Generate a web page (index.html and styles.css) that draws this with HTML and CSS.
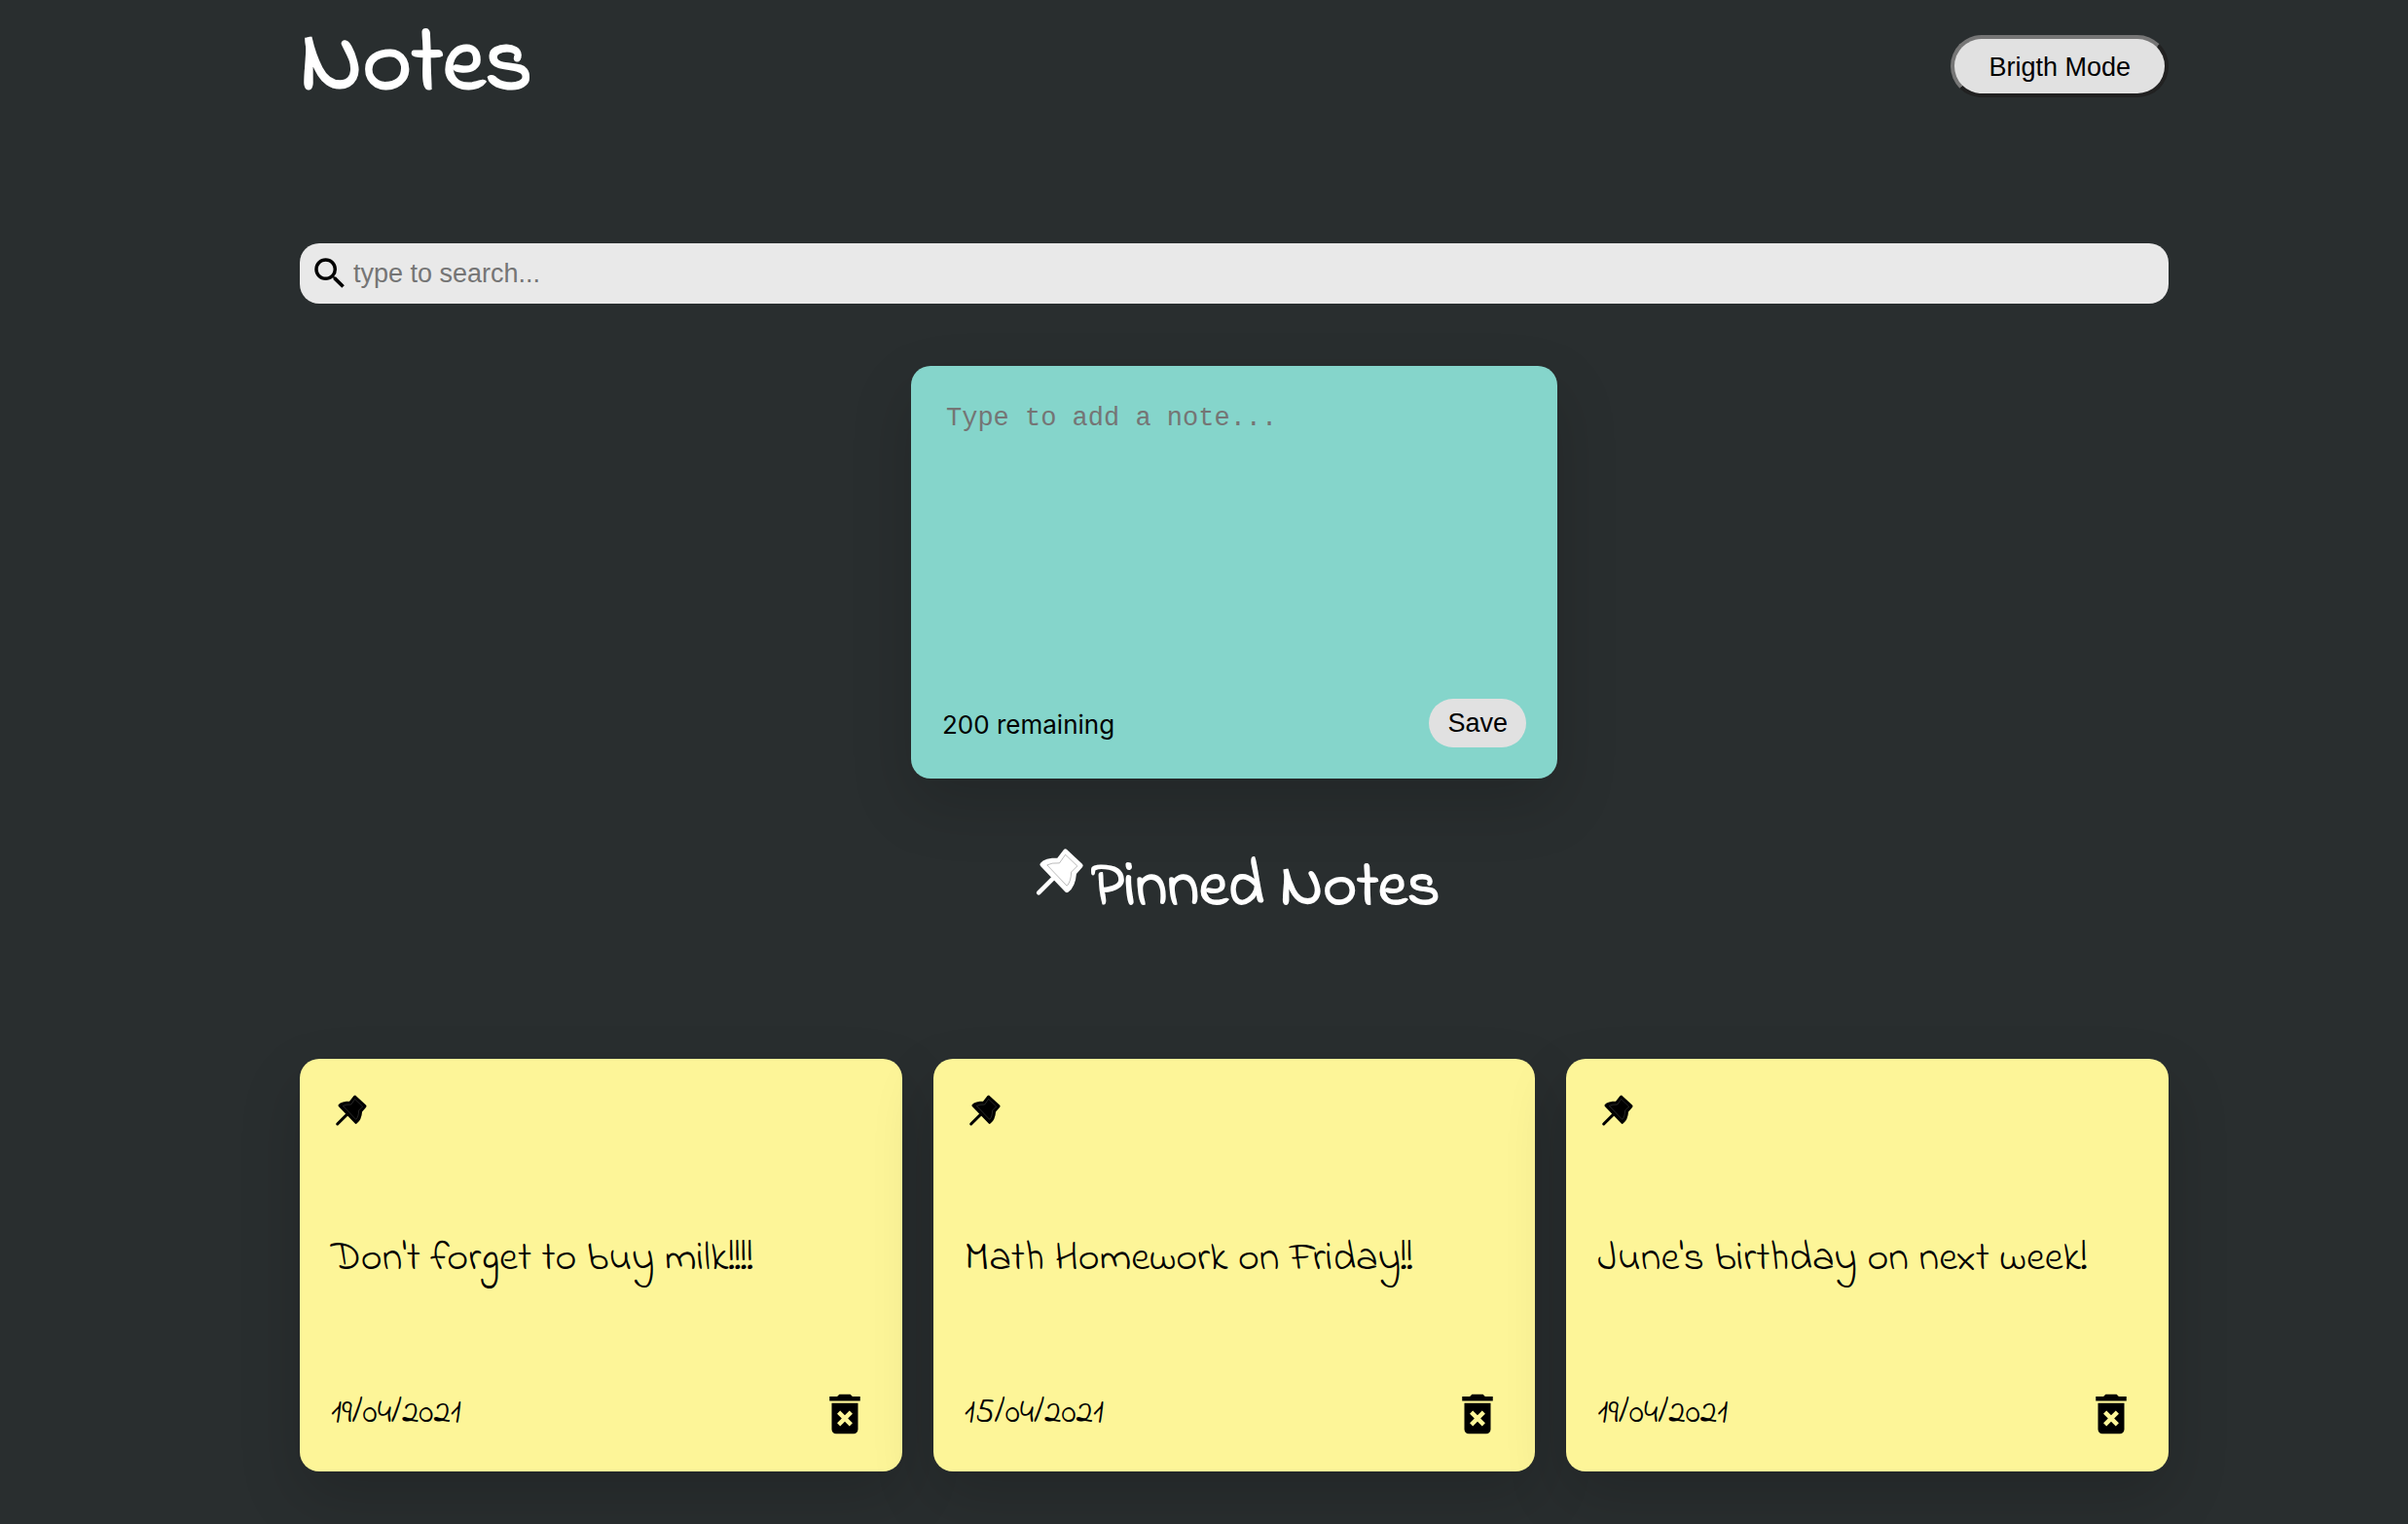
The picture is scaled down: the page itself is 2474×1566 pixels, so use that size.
FILE: index.html
```html
<!DOCTYPE html>
<html lang="en">
<head>
<meta charset="utf-8">
<meta name="viewport" content="width=device-width, initial-scale=1">
<title>Notes</title>
<link rel="stylesheet" href="styles.css">
</head>
<body>
<svg class="sprite" aria-hidden="true">
  <symbol id="search" viewBox="0 0 24 24">
    <path d="M15.5 14h-.79l-.28-.27A6.471 6.471 0 0 0 16 9.5 6.5 6.5 0 1 0 9.5 16c1.61 0 3.09-.59 4.23-1.57l.27.28v.79l5 4.99L20.49 19l-4.99-5zm-6 0C7.01 14 5 11.99 5 9.5S7.01 5 9.5 5 14 7.01 14 9.5 11.99 14 9.5 14z"/>
  </symbol>
  <symbol id="pin" viewBox="60 30 126 126">
    <path d="M80 135L112 103" fill="none" stroke="currentColor" stroke-width="9" stroke-linecap="round"/>
    <path d="M134 51L165 80L152 95Q150 121 137 130L87 78Q94 69 120 69Z" stroke="currentColor" stroke-width="9" stroke-linejoin="round"/>
    <path class="pin-line" d="M134 58L158 81L146 93Q145 114 137 121L97 79Q106 74 122 75Z" fill="none" stroke-width="1"/>
  </symbol>
  <symbol id="trash" viewBox="0 0 24 24">
    <path d="M6 19c0 1.1.9 2 2 2h8c1.1 0 2-.9 2-2V7H6v12zm2.46-7.12l1.41-1.41L12 12.59l2.12-2.12 1.41 1.41L13.41 14l2.12 2.12-1.41 1.41L12 15.41l-2.12 2.12-1.41-1.41L10.59 14l-2.13-2.12zM15.5 4l-1-1h-5l-1 1H5v2h14V4z"/>
  </symbol>
</svg>
<main class="container">
  <header class="header">
    <h1 class="title">Notes</h1>
    <button class="mode" type="button">Brigth Mode</button>
  </header>

  <label class="search">
    <svg class="icon" aria-hidden="true"><use href="#search"/></svg>
    <input class="search-input" type="text" placeholder="type to search..." aria-label="Search notes">
  </label>

  <form class="note note-new">
    <textarea class="note-input" placeholder="Type to add a note..." aria-label="New note"></textarea>
    <div class="note-footer">
      <span class="remaining">200 remaining</span>
      <button class="save" type="button">Save</button>
    </div>
  </form>

  <h2 class="pinned">
    <svg class="icon icon-large" aria-hidden="true"><use href="#pin"/></svg>
    <span>Pinned Notes</span>
  </h2>

  <section class="grid">
    <article class="note">
      <button class="icon-button" type="button" aria-label="Unpin"><svg class="icon"><use href="#pin"/></svg></button>
      <p class="note-text">Don't forget to buy milk!!!!</p>
      <div class="note-footer">
        <time class="date">19/04/2021</time>
        <button class="icon-button" type="button" aria-label="Delete"><svg class="icon icon-trash"><use href="#trash"/></svg></button>
      </div>
    </article>
    <article class="note">
      <button class="icon-button" type="button" aria-label="Unpin"><svg class="icon"><use href="#pin"/></svg></button>
      <p class="note-text">Math Homework on Friday!!</p>
      <div class="note-footer">
        <time class="date">15/04/2021</time>
        <button class="icon-button" type="button" aria-label="Delete"><svg class="icon icon-trash"><use href="#trash"/></svg></button>
      </div>
    </article>
    <article class="note">
      <button class="icon-button" type="button" aria-label="Unpin"><svg class="icon"><use href="#pin"/></svg></button>
      <p class="note-text">June's birthday on next week!</p>
      <div class="note-footer">
        <time class="date">19/04/2021</time>
        <button class="icon-button" type="button" aria-label="Delete"><svg class="icon icon-trash"><use href="#trash"/></svg></button>
      </div>
    </article>
  </section>
</main>
</body>
</html>
```
FILE: styles.css
```css
* {
  box-sizing: border-box;
}

body {
  margin: 0;
  padding: 0 0 0 62px;
  background: #292e2f;
  color: #000;
  font-family: "Liberation Sans", Arial, sans-serif;
  font-size: 27px;
}

button,
input,
textarea {
  color: #000;
  font-family: inherit;
  font-size: 27px;
}

.sprite {
  position: absolute;
  width: 0;
  height: 0;
}

.container {
  max-width: 1920px;
  margin: 0 auto;
  padding-bottom: 54px;
}

.header {
  display: flex;
  align-items: center;
  justify-content: space-between;
  height: 136px;
  margin-bottom: 114px;
}

.title,
.pinned {
  margin: 0;
  color: #fff;
  font-family: "Indie Flower", "Comic Sans MS", cursive;
  font-weight: 700;
}

.title {
  font-size: 96px;
  line-height: 136px;
}

.mode {
  height: 64px;
  padding: 2px 35px 0;
  border: 4px solid;
  border-color: #767676 #212121 #212121 #767676;
  border-radius: 32px;
  background: #e1e1e1;
}

.search {
  display: flex;
  align-items: center;
  height: 62px;
  padding: 0 10px;
  border-radius: 20px;
  background: #e9e9e9;
}

.search-input {
  flex: 1;
  min-width: 0;
  padding: 0 3px;
  border: 0;
  outline: 0;
  background: none;
}

::placeholder {
  color: #757575;
  opacity: 1;
}

.icon {
  display: block;
  flex: none;
  width: 42px;
  height: 42px;
  fill: currentColor;
}

.icon-large {
  width: 64px;
  height: 64px;
}

.icon-trash {
  width: 54px;
  height: 54px;
}

.pin-line {
  stroke: #777;
}

.note {
  display: flex;
  flex-direction: column;
  align-items: flex-start;
  justify-content: space-between;
  min-height: 424px;
  padding: 32px;
  border-radius: 20px;
  background: #fdf598;
  box-shadow: 0 26px 64px rgba(0, 0, 0, .16);
}

.note-new {
  max-width: 664px;
  margin: 64px auto;
  background: #85d5cb;
}

.note-input {
  flex: 1;
  width: 100%;
  padding: 7px 4px;
  border: 0;
  outline: 0;
  resize: none;
  background: none;
  font-family: "Liberation Mono", "Courier New", monospace;
}

.note-footer {
  display: flex;
  align-items: center;
  justify-content: space-between;
  width: 100%;
}

.remaining {
  padding-top: 2px;
  font-family: Inter, sans-serif;
  font-size: 26px;
}

.save {
  height: 50px;
  padding: 0 19px;
  border: 0;
  border-radius: 25px;
  background: #e1e1e1;
}

.pinned {
  display: flex;
  justify-content: center;
  margin-bottom: 126px;
  font-size: 66px;
  line-height: 98px;
}

.grid {
  display: grid;
  grid-template-columns: repeat(auto-fit, minmax(500px, 1fr));
  gap: 32px;
}

.icon-button {
  padding: 0;
  border: 0;
  background: none;
}

.note-text,
.date {
  font-family: "Indie Flower", "Comic Sans MS", cursive;
}

.note-text {
  margin: 0;
  font-size: 42px;
  line-height: 56px;
}

.date {
  font-size: 35px;
  line-height: 54px;
}
```
